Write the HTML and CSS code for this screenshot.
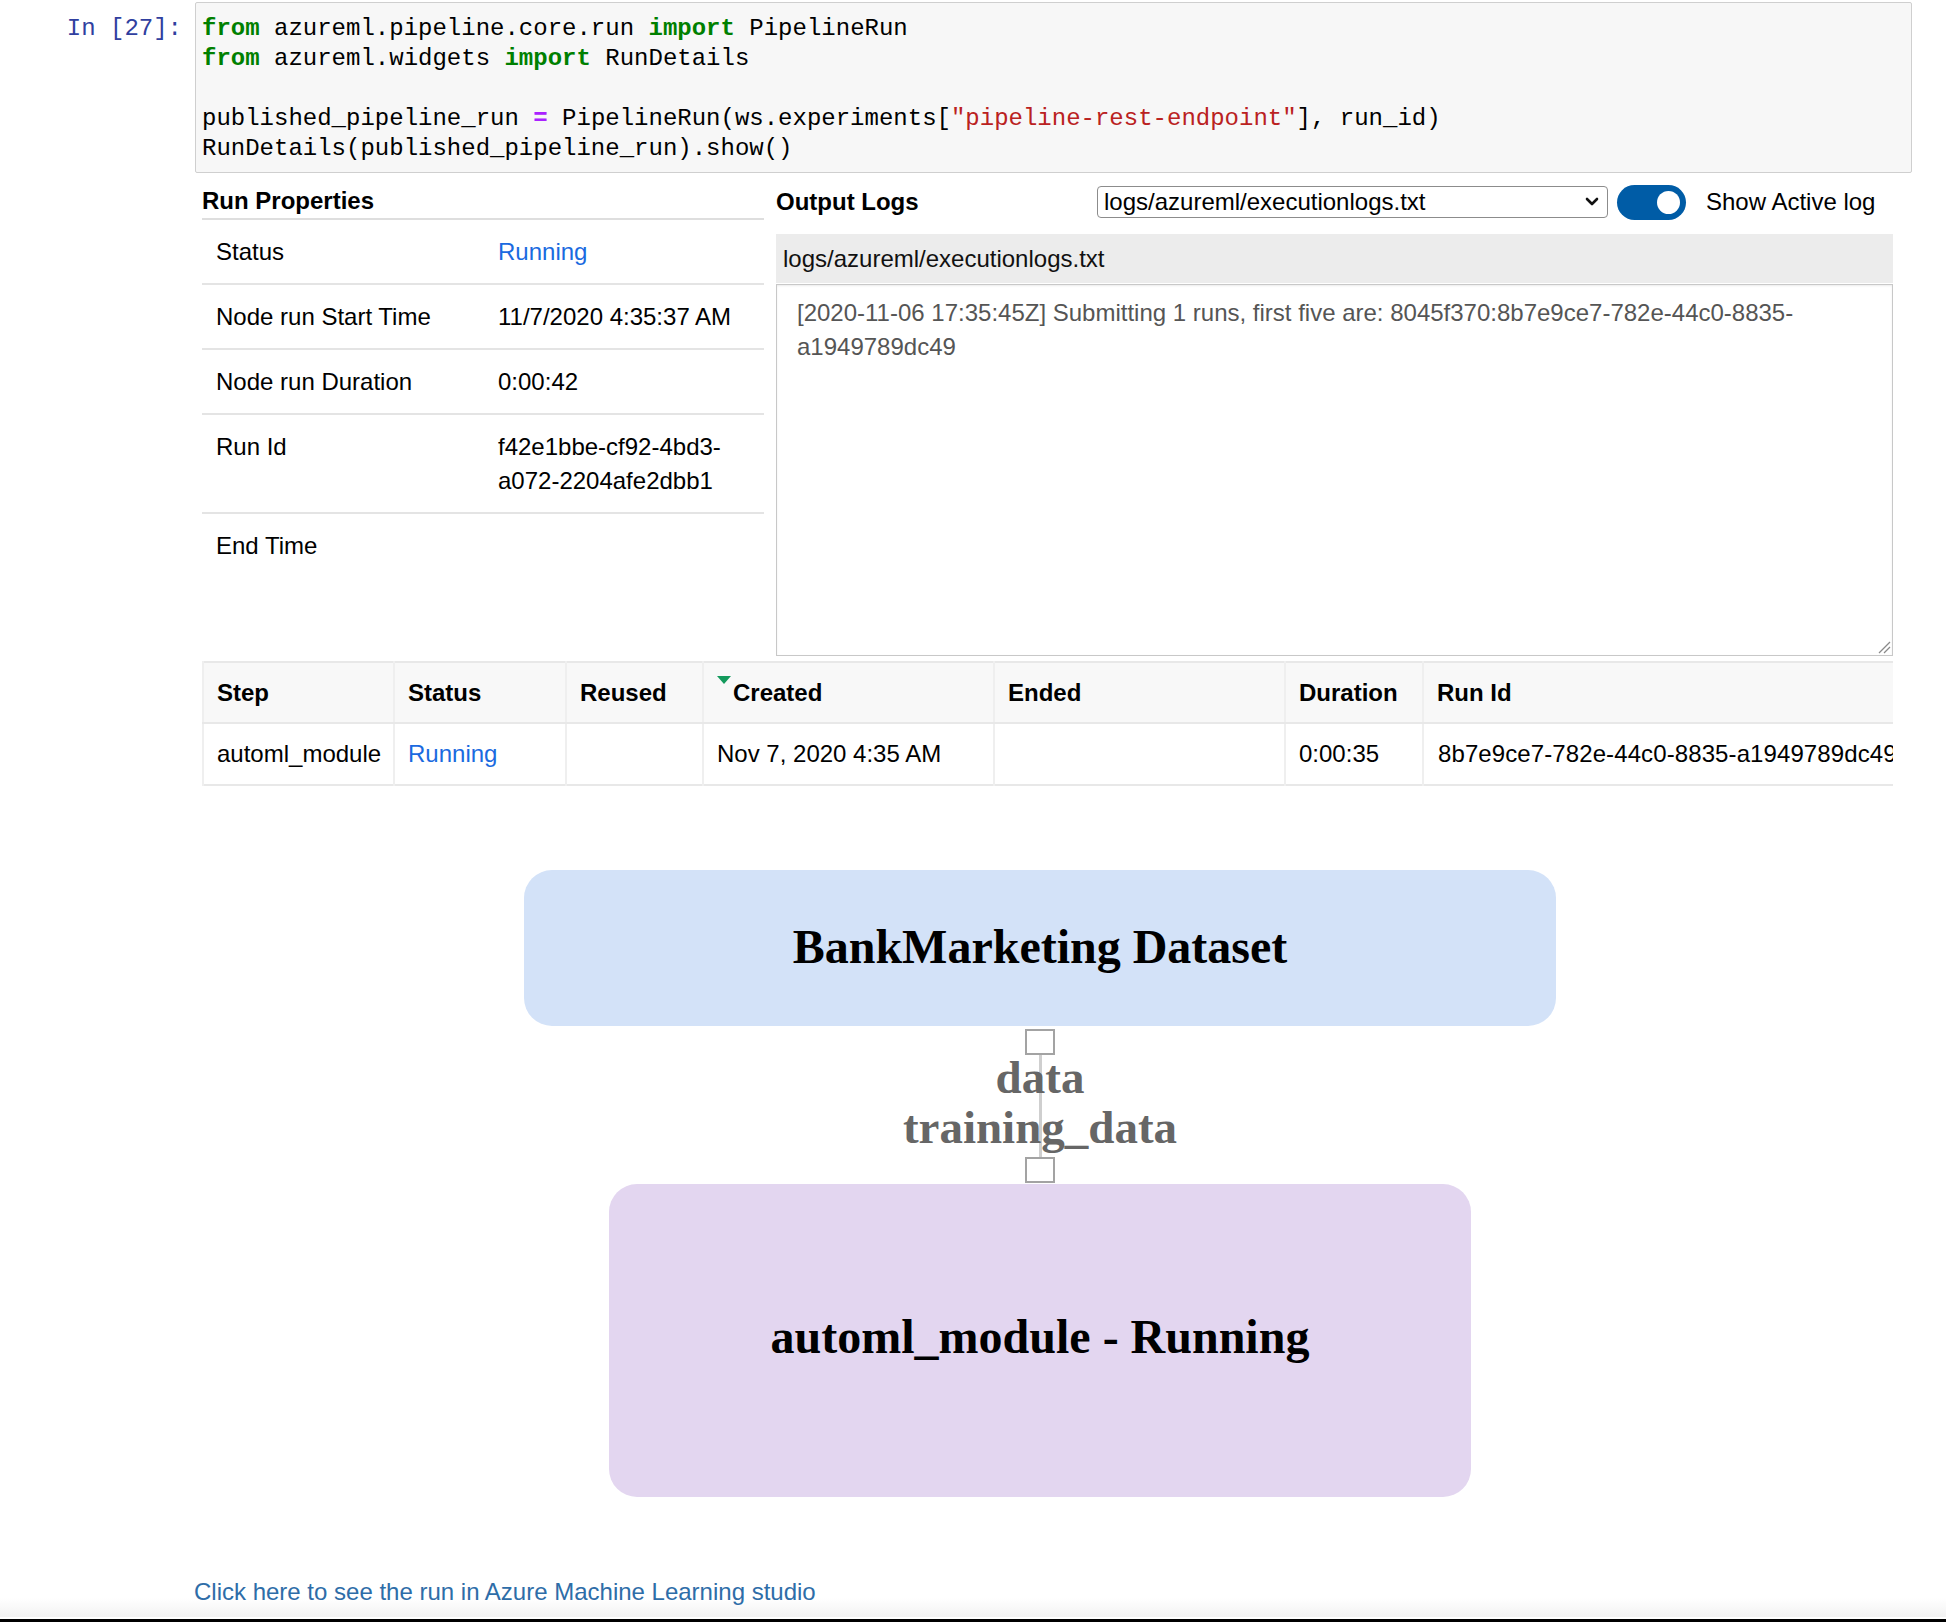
FILE: index.html
```html
<!DOCTYPE html>
<html lang="en">
<head>
<meta charset="utf-8">
<title>RunDetails</title>
<link rel="stylesheet" href="styles.css">
</head>
<body>
<div class="page">
  <div class="cell">
    <div class="prompt">In&nbsp;[27]:</div>
    <div class="input"><pre class="code"><span class="kw">from</span> azureml.pipeline.core.run <span class="kw">import</span> PipelineRun
<span class="kw">from</span> azureml.widgets <span class="kw">import</span> RunDetails

published_pipeline_run <span class="op">=</span> PipelineRun(ws.experiments[<span class="str">"pipeline-rest-endpoint"</span>], run_id)
RunDetails(published_pipeline_run).show()</pre></div>
  </div>

  <div class="output">
    <div class="widget">
      <div class="top">
        <section class="props">
          <div class="props-title">Run Properties</div>
          <div class="prop-row"><div class="prop-key">Status</div><div class="prop-val running">Running</div></div>
          <div class="prop-row"><div class="prop-key">Node run Start Time</div><div class="prop-val">11/7/2020 4:35:37 AM</div></div>
          <div class="prop-row"><div class="prop-key">Node run Duration</div><div class="prop-val">0:00:42</div></div>
          <div class="prop-row"><div class="prop-key">Run Id</div><div class="prop-val">f42e1bbe-cf92-4bd3-a072-2204afe2dbb1</div></div>
          <div class="prop-row last"><div class="prop-key">End Time</div><div class="prop-val"></div></div>
        </section>

        <section class="logs">
          <div class="logs-head">
            <div class="logs-title">Output Logs</div>
            <div class="select">
              <span class="select-text">logs/azureml/executionlogs.txt</span>
              <svg class="chev" width="14" height="10" viewBox="0 0 14 10"><polyline points="2,2 7,7 12,2" fill="none" stroke="#111" stroke-width="2.6" stroke-linecap="round" stroke-linejoin="round"/></svg>
            </div>
            <div class="toggle"><span class="knob"></span></div>
            <div class="toggle-label">Show Active log</div>
          </div>
          <div class="log-bar">logs/azureml/executionlogs.txt</div>
          <div class="log-box">[2020-11-06 17:35:45Z] Submitting 1 runs, first five are: 8045f370:8b7e9ce7-782e-44c0-8835-a1949789dc49<svg class="grip" width="14" height="14" viewBox="0 0 14 14"><line x1="2" y1="13" x2="13" y2="2" stroke="#8a8a8a" stroke-width="1.2"/><line x1="7" y1="13" x2="13" y2="7" stroke="#8a8a8a" stroke-width="1.2"/></svg></div>
        </section>
      </div>

      <div class="steps">
        <table class="steps-table">
          <colgroup>
            <col class="c-step"><col class="c-status"><col class="c-reused"><col class="c-created"><col class="c-ended"><col class="c-duration"><col class="c-runid">
          </colgroup>
          <thead>
            <tr>
              <th>Step</th>
              <th>Status</th>
              <th>Reused</th>
              <th class="sorted"><span class="sort-arrow"></span>Created</th>
              <th>Ended</th>
              <th>Duration</th>
              <th>Run Id</th>
            </tr>
          </thead>
          <tbody>
            <tr>
              <td>automl_module</td>
              <td class="running">Running</td>
              <td></td>
              <td>Nov 7, 2020 4:35 AM</td>
              <td></td>
              <td>0:00:35</td>
              <td class="runid">8b7e9ce7-782e-44c0-8835-a1949789dc49</td>
            </tr>
          </tbody>
        </table>
      </div>
    </div>

    <div class="graph">
      <div class="node dataset">BankMarketing Dataset</div>
      <div class="edge">
        <span class="port"></span>
        <div class="edge-labels">
          <div>data</div>
          <div>training_data</div>
        </div>
        <span class="port"></span>
      </div>
      <div class="node module">automl_module - Running</div>
    </div>

    <div class="footer">
      <a class="studio-link" href="#">Click here to see the run in Azure Machine Learning studio</a>
    </div>
  </div>
  <div class="bottom-bar"></div>
</div>
</body>
</html>
```

FILE: styles.css
```css
* { box-sizing: border-box; }

html, body {
  margin: 0;
  padding: 0;
  background: #fff;
}

body {
  font-family: "Liberation Sans", Arial, sans-serif;
  font-size: 24px;
  color: #000;
  width: 1946px;
  height: 1622px;
  overflow: hidden;
}

.page {
  display: flex;
  flex-direction: column;
  height: 1622px;
}

/* ---------- notebook cell ---------- */
.cell {
  display: flex;
  align-items: flex-start;
  padding-top: 2px;
  padding-right: 34px;
}

.prompt {
  flex: 0 0 195px;
  text-align: right;
  padding-right: 13px;
  padding-top: 12px;
  font-family: "Liberation Mono", monospace;
  font-size: 24px;
  line-height: 30px;
  color: #303f9f;
}

.input {
  flex: 1;
  background: #f7f7f7;
  border: 1px solid #cfcfcf;
  border-radius: 2px;
  padding: 11px 6px 8px 6px;
}

.code {
  margin: 0;
  font-family: "Liberation Mono", monospace;
  font-size: 24px;
  line-height: 30px;
  color: #000;
  white-space: pre;
}

.kw { color: #008000; font-weight: bold; }
.op { color: #aa22ff; font-weight: bold; }
.str { color: #ba2121; }

/* ---------- output ---------- */
.output {
  padding-left: 202px;
  display: flex;
  flex-direction: column;
}

.widget {
  width: 1691px;
  margin-top: 11px;
}

.top {
  display: flex;
  align-items: flex-start;
  gap: 12px;
}

/* run properties */
.props {
  flex: 0 0 562px;
}

.props-title {
  font-weight: bold;
  line-height: 34px;
  border-bottom: 2px solid #dedede;
}

.prop-row {
  display: grid;
  grid-template-columns: 282px 1fr;
  padding: 15px 0 14px;
  line-height: 34px;
  border-bottom: 2px solid #e4e4e4;
}

.prop-row.last { border-bottom: none; }

.prop-key,
.prop-val {
  padding-left: 14px;
  padding-right: 14px;
}

.running { color: #1a6ae0; }

/* output logs */
.logs {
  flex: 0 0 1117px;
}

.logs-head {
  display: flex;
  align-items: center;
  height: 36px;
}

.logs-title {
  flex: 0 0 321px;
  font-weight: bold;
}

.select {
  flex: 0 0 511px;
  height: 32px;
  border: 1px solid #8c8c8c;
  border-radius: 4px;
  display: flex;
  align-items: center;
  justify-content: space-between;
  padding: 0 8px 0 6px;
  line-height: 30px;
}

.chev { display: block; }

.toggle {
  flex: 0 0 69px;
  height: 35px;
  margin-left: 9px;
  border-radius: 18px;
  background: #005ca6;
  display: flex;
  align-items: center;
  justify-content: flex-end;
  padding-right: 6px;
}

.knob {
  width: 23px;
  height: 23px;
  border-radius: 50%;
  background: #fff;
}

.toggle-label {
  margin-left: 20px;
  white-space: nowrap;
}

.log-bar {
  margin-top: 14px;
  height: 49px;
  background: #ececec;
  padding-left: 7px;
  line-height: 49px;
  color: #111;
}

.log-box {
  position: relative;
  margin-top: 1px;
  height: 372px;
  border: 1px solid #c8c8c8;
  box-shadow: inset 0 1px 2px rgba(0,0,0,0.08);
  padding: 11px 20px;
  line-height: 34px;
  color: #555;
}

.grip {
  position: absolute;
  right: 1px;
  bottom: 1px;
}

/* steps table */
.steps {
  margin-top: 5px;
  overflow: hidden;
}

.steps-table {
  width: 1691px;
  table-layout: fixed;
  border-collapse: collapse;
  border: 2px solid #e8e8e8;
}

.c-step { width: 191px; }
.c-status { width: 172px; }
.c-reused { width: 137px; }
.c-created { width: 291px; }
.c-ended { width: 291px; }
.c-duration { width: 138px; }
.c-runid { width: 471px; }

.steps-table th,
.steps-table td {
  text-align: left;
  padding: 0 0 0 13px;
  white-space: nowrap;
  overflow: hidden;
  border-left: 2px solid #efefef;
  line-height: 34px;
}

.steps-table th {
  height: 61px;
  background: #f8f8f8;
  font-weight: bold;
  border-bottom: 2px solid #e8e8e8;
}

.steps-table td {
  height: 62px;
  background: #fff;
}

.steps-table td.runid {
  padding-left: 14px;
  letter-spacing: 0.1px;
}

.steps-table th.sorted {
  position: relative;
  padding-left: 29px;
}

.sort-arrow {
  position: absolute;
  left: 13px;
  top: 13px;
  width: 0;
  height: 0;
  border-left: 7px solid transparent;
  border-right: 7px solid transparent;
  border-top: 8px solid #139a5c;
}

/* graph */
.graph {
  width: 1676px;
  margin-top: 84px;
  display: flex;
  flex-direction: column;
  align-items: center;
  font-family: "Liberation Serif", "Times New Roman", serif;
  font-weight: bold;
  font-size: 48px;
}

.node {
  display: flex;
  align-items: center;
  justify-content: center;
  border-radius: 28px;
  color: #000;
}

.dataset {
  width: 1032px;
  height: 156px;
  padding-bottom: 3px;
  background: #d3e2f8;
}

.module {
  width: 862px;
  height: 313px;
  padding-bottom: 8px;
  background: #e3d6f0;
}

.edge {
  position: relative;
  display: flex;
  flex-direction: column;
  align-items: center;
  margin: 3px 0 1px;
}

.edge::before {
  content: "";
  position: absolute;
  left: 50%;
  top: 24px;
  bottom: 24px;
  width: 3px;
  margin-left: -1px;
  background: #cfcfcf;
}

.port {
  position: relative;
  z-index: 1;
  width: 30px;
  height: 26px;
  border: 2px solid #a3a3a3;
  background: #fff;
}

.edge-labels {
  position: relative;
  z-index: 1;
  margin: -3px 0 5px;
  text-align: center;
  line-height: 50px;
  font-size: 47px;
  color: #666;
}

/* footer link */
.footer {
  margin-top: 78px;
  margin-left: -202px;
  padding-left: 194px;
  height: 42px;
  background: linear-gradient(to bottom, rgba(255,255,255,0) 55%, #f2f2f2 100%);
}

.studio-link {
  color: #2e6da8;
  text-decoration: none;
  line-height: 34px;
}

.bottom-bar {
  margin-top: auto;
  flex: 0 0 3px;
  height: 3px;
  background: #000;
}
```
